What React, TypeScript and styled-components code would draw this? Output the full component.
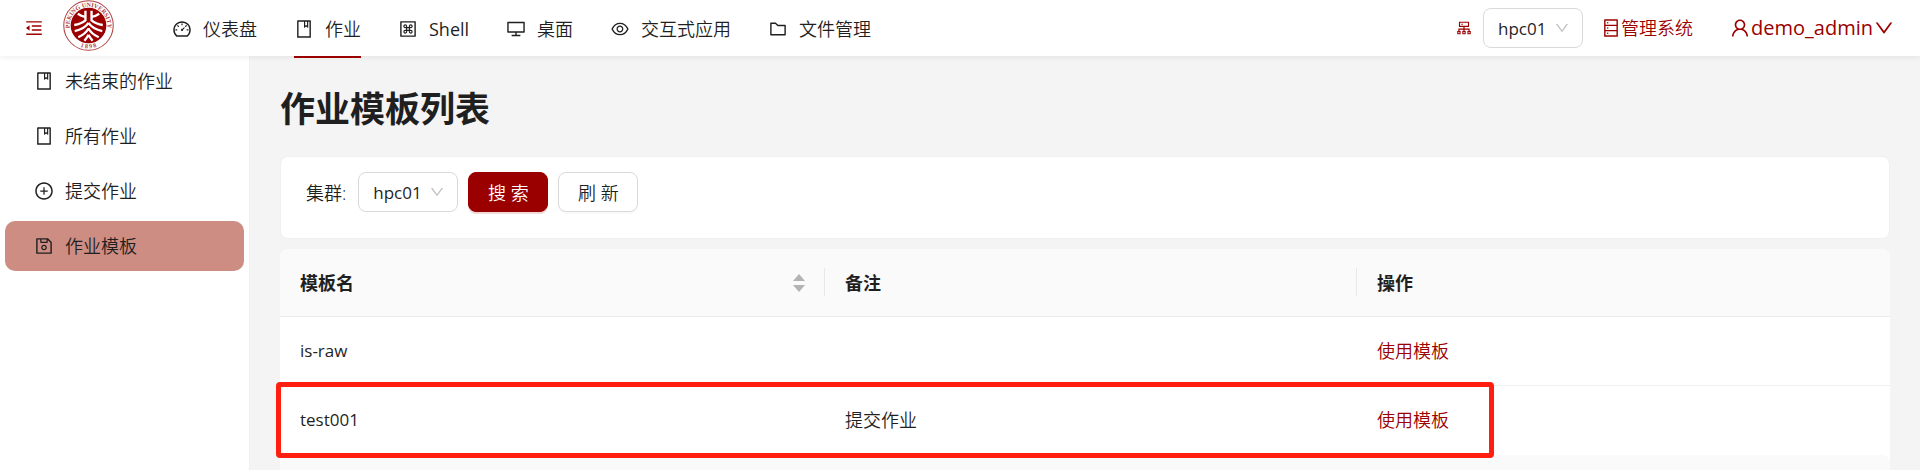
import React from "react";
import styled, { createGlobalStyle } from "styled-components";
import {
  AiOutlineBook,
  AiOutlineCluster,
  AiOutlineDashboard,
  AiOutlineDatabase,
  AiOutlineDesktop,
  AiOutlineDown,
  AiOutlineEye,
  AiOutlineFolder,
  AiOutlineMacCommand,
  AiOutlineMenuFold,
  AiOutlinePlusCircle,
  AiOutlineSave,
  AiOutlineUser,
} from "react-icons/ai";

const primary = "#9b0000";
const ink = "#1f1f1f";

const GlobalStyle = createGlobalStyle`
  *, *::before, *::after { box-sizing: border-box; }
  body {
    margin: 0;
    background: #f4f4f4;
    color: ${ink};
    font-family: "Open Sans", "Noto Sans CJK SC", sans-serif;
    font-size: 18px;
    font-weight: 350;
    line-height: 28px;
  }
  button, select { font: inherit; color: inherit; }
  a { color: inherit; text-decoration: none; }
  svg { flex: none; display: block; }
`;

const Page = styled.div`
  min-height: 100vh;
  display: flex;
  flex-direction: column;
`;

const Header = styled.header`
  position: relative;
  z-index: 1;
  height: 56px;
  display: flex;
  align-items: center;
  padding: 0 25px 0 24px;
  background: #fff;
  box-shadow: 0 1px 6px rgba(0, 0, 0, 0.08);
`;

const FoldButton = styled.button`
  display: flex;
  padding: 0;
  border: 0;
  background: none;
  color: ${primary};
`;

const LogoLink = styled.a`
  align-self: flex-start;
  margin-left: 19px;
`;

const TopNav = styled.nav`
  display: flex;
  gap: 37px;
  margin-left: 58px;
  align-self: stretch;
`;

const TopLink = styled.a<{ $active?: boolean; $latin?: boolean }>`
  display: flex;
  align-items: center;
  gap: 11px;
  height: 58px;
  padding-top: 2px;
  border-bottom: 2px solid ${(p) => (p.$active ? primary : "transparent")};
  font-weight: ${(p) => (p.$latin ? 400 : 350)};
  white-space: nowrap;
`;

const HeaderTools = styled.div`
  display: flex;
  align-items: center;
  margin-left: auto;
  color: ${primary};
  white-space: nowrap;
`;

const ToolSelect = styled.div`
  display: flex;
  margin-left: 10px;
`;

const ToolLink = styled.a`
  display: flex;
  align-items: center;
  margin-left: 18px;
`;

const UserButton = styled.button`
  display: flex;
  align-items: center;
  margin-left: 36px;
  padding: 0;
  border: 0;
  background: none;
  font-size: 20px;
  font-weight: 400;
`;

const SelectBox = styled.span`
  position: relative;
  display: inline-flex;
  color: ${ink};
`;

const Select = styled.select`
  appearance: none;
  width: 100px;
  height: 40px;
  padding: 1px 36px 0 14px;
  border: 1px solid #d9d9d9;
  border-radius: 8px;
  background: #fff;
  font-size: 17px;
  font-weight: 400;
`;

const SelectArrow = styled(AiOutlineDown)`
  position: absolute;
  right: 13px;
  top: 12px;
  color: #bfbfbf;
  pointer-events: none;
`;

const Body = styled.div`
  flex: 1;
  display: flex;
`;

const Sidebar = styled.nav`
  flex: none;
  width: 250px;
  display: flex;
  flex-direction: column;
  gap: 5px;
  padding: 0 5px;
  background: #fff;
  border-right: 1px solid #f0f0f0;
`;

const SideLink = styled.a<{ $active?: boolean }>`
  display: flex;
  align-items: center;
  gap: 11px;
  height: 50px;
  padding-left: 29px;
  border-radius: 10px;
  background: ${(p) => (p.$active ? "#cd8d82" : "transparent")};
`;

const Main = styled.main`
  flex: 1;
  min-width: 0;
  display: flex;
  flex-direction: column;
  padding: 30px 30px 0;
`;

const Title = styled.h1`
  margin: 0 0 24px;
  font-size: 35px;
  line-height: 46px;
  font-weight: 700;
`;

const FilterCard = styled.form`
  display: flex;
  align-items: center;
  gap: 10px;
  padding: 15px 25px 26px;
  border: 1px solid #f0f0f0;
  border-radius: 8px;
  background: #fff;
`;

const FilterLabel = styled.label`
  padding: 2px 2px 0 0;
`;

const Button = styled.button<{ $primary?: boolean }>`
  width: 80px;
  height: 40px;
  padding: 2px 0 0;
  border: 1px solid ${(p) => (p.$primary ? primary : "#d9d9d9")};
  border-radius: 8px;
  background: ${(p) => (p.$primary ? primary : "#fff")};
  color: ${(p) => (p.$primary ? "#fff" : ink)};
  box-shadow: 0 2px 0 ${(p) => (p.$primary ? "rgba(155, 0, 0, 0.15)" : "rgba(0, 0, 0, 0.02)")};
`;

const TableCard = styled.div`
  position: relative;
  margin-top: 10px;
  border-radius: 8px 8px 0 0;
  background: #fff;
`;

const Table = styled.table`
  width: 100%;
  border-collapse: separate;
  border-spacing: 0;
  table-layout: fixed;
`;

const HeadCell = styled.th<{ $width?: string; $divided?: boolean }>`
  position: relative;
  width: ${(p) => p.$width ?? "auto"};
  height: 68px;
  padding: 0 20px;
  background: #fafafa;
  border-bottom: 1px solid #ebebeb;
  text-align: left;
  font-weight: 700;
  &:first-child { border-top-left-radius: 8px; }
  &:last-child { border-top-right-radius: 8px; }
  &::after {
    content: "";
    display: ${(p) => (p.$divided ? "block" : "none")};
    position: absolute;
    right: 0;
    top: 19px;
    width: 1px;
    height: 28px;
    background: #e8e8e8;
  }
`;

const HeadLabel = styled.div`
  display: flex;
  align-items: center;
  justify-content: space-between;
`;

const Cell = styled.td<{ $latin?: boolean }>`
  height: 69px;
  padding: 0 20px;
  border-bottom: 1px solid #f0f0f0;
  font-size: ${(p) => (p.$latin ? 17 : 18)}px;
  font-weight: ${(p) => (p.$latin ? 400 : 350)};
  tr:last-child > & { border-bottom-color: transparent; }
`;

const UseLink = styled.a`
  color: ${primary};
`;

const Highlight = styled.div`
  position: absolute;
  left: -4px;
  bottom: -3px;
  width: calc(75% + 10px);
  height: 76px;
  border: 5px solid #ff1e10;
  border-radius: 4px;
  pointer-events: none;
`;

const FooterBack = styled.div`
  flex: 1;
  display: flex;
  background: #fff;
`;

const TableFooter = styled.div`
  flex: 1;
  border-radius: 8px 8px 0 0;
  background: #fafafa;
`;

function Seal() {
  return (
    <svg width="51" height="51" viewBox="0 0 100 100" role="img" aria-label="Peking University 1898">
      <defs>
        <path id="sealTop" d="M 17 67 A 37 37 0 1 1 83 67" />
        <path id="sealBottom" d="M 22 85 A 45 45 0 0 0 78 85" />
      </defs>
      <circle cx="50" cy="50" r="48.5" fill="#fff" stroke="#b04040" strokeWidth="2" />
      <circle cx="50" cy="50" r="35" fill={primary} />
      <text fill="#b04040" fontSize="12" fontWeight="700" fontFamily="Liberation Serif, serif">
        <textPath href="#sealTop" startOffset="50%" textAnchor="middle">PEKING UNIVERSITY</textPath>
      </text>
      <text fill="#b04040" fontSize="12" fontWeight="700" fontFamily="Liberation Serif, serif">
        <textPath href="#sealBottom" startOffset="50%" textAnchor="middle">1 8 9 8</textPath>
      </text>
      <g fill="none" stroke="#fff" strokeWidth="4.6">
        <path d="M44 21 V40 Q36 47 22 49" />
        <path d="M56 21 V40 Q64 47 78 49" />
        <path d="M44 33 Q36 32 29 27 M56 33 Q64 32 71 27" />
        <path d="M50 45 Q42 57 23 61 M50 45 Q58 57 77 61" />
        <path d="M50 56 Q44 67 30 73 M50 56 Q56 67 70 73" />
        <path d="M50 68 Q47 74 42 80 M50 68 Q53 74 58 80" />
      </g>
    </svg>
  );
}

function SortIcon() {
  return (
    <svg width="12" height="18" viewBox="0 0 12 18" fill="#b3b3b3" aria-hidden="true">
      <path d="M6 0 L12 7 H0 Z M6 18 L12 11 H0 Z" />
    </svg>
  );
}

function ClusterSelect({ id, label }: { id: string; label?: string }) {
  return (
    <SelectBox>
      <Select id={id} aria-label={label} defaultValue="hpc01">
        <option value="hpc01">hpc01</option>
      </Select>
      <SelectArrow size={16} />
    </SelectBox>
  );
}

const topItems = [
  { label: "仪表盘", Icon: AiOutlineDashboard },
  { label: "作业", Icon: AiOutlineBook, active: true },
  { label: "Shell", Icon: AiOutlineMacCommand, latin: true },
  { label: "桌面", Icon: AiOutlineDesktop },
  { label: "交互式应用", Icon: AiOutlineEye },
  { label: "文件管理", Icon: AiOutlineFolder },
];

const sideItems = [
  { label: "未结束的作业", Icon: AiOutlineBook },
  { label: "所有作业", Icon: AiOutlineBook },
  { label: "提交作业", Icon: AiOutlinePlusCircle },
  { label: "作业模板", Icon: AiOutlineSave, active: true },
];

const templates = [
  { name: "is-raw", comment: "" },
  { name: "test001", comment: "提交作业" },
];

export default function App() {
  return (
    <Page>
      <GlobalStyle />
      <Header>
        <FoldButton type="button" aria-label="收起菜单">
          <AiOutlineMenuFold size={20} />
        </FoldButton>
        <LogoLink href="#">
          <Seal />
        </LogoLink>
        <TopNav>
          {topItems.map(({ label, Icon, active, latin }) => (
            <TopLink key={label} href="#" $active={active} $latin={latin}>
              <Icon size={20} />
              {label}
            </TopLink>
          ))}
        </TopNav>
        <HeaderTools>
          <AiOutlineCluster size={18} />
          <ToolSelect>
            <ClusterSelect id="header-cluster" label="默认集群" />
          </ToolSelect>
          <ToolLink href="#">
            <AiOutlineDatabase size={20} />
            管理系统
          </ToolLink>
          <UserButton type="button">
            <AiOutlineUser size={22} />
            demo_admin
            <AiOutlineDown size={22} />
          </UserButton>
        </HeaderTools>
      </Header>
      <Body>
        <Sidebar>
          {sideItems.map(({ label, Icon, active }) => (
            <SideLink key={label} href="#" $active={active}>
              <Icon size={20} />
              {label}
            </SideLink>
          ))}
        </Sidebar>
        <Main>
          <Title>作业模板列表</Title>
          <FilterCard onSubmit={(e) => e.preventDefault()}>
            <FilterLabel htmlFor="filter-cluster">集群:</FilterLabel>
            <ClusterSelect id="filter-cluster" />
            <Button type="submit" $primary>搜 索</Button>
            <Button type="button">刷 新</Button>
          </FilterCard>
          <TableCard>
            <Table>
              <thead>
                <tr>
                  <HeadCell $width="33.85%" $divided>
                    <HeadLabel>
                      模板名
                      <SortIcon />
                    </HeadLabel>
                  </HeadCell>
                  <HeadCell $width="33.05%" $divided>备注</HeadCell>
                  <HeadCell>操作</HeadCell>
                </tr>
              </thead>
              <tbody>
                {templates.map((t) => (
                  <tr key={t.name}>
                    <Cell $latin>{t.name}</Cell>
                    <Cell>{t.comment}</Cell>
                    <Cell>
                      <UseLink href="#">使用模板</UseLink>
                    </Cell>
                  </tr>
                ))}
              </tbody>
            </Table>
            <Highlight />
          </TableCard>
          <FooterBack>
            <TableFooter />
          </FooterBack>
        </Main>
      </Body>
    </Page>
  );
}
